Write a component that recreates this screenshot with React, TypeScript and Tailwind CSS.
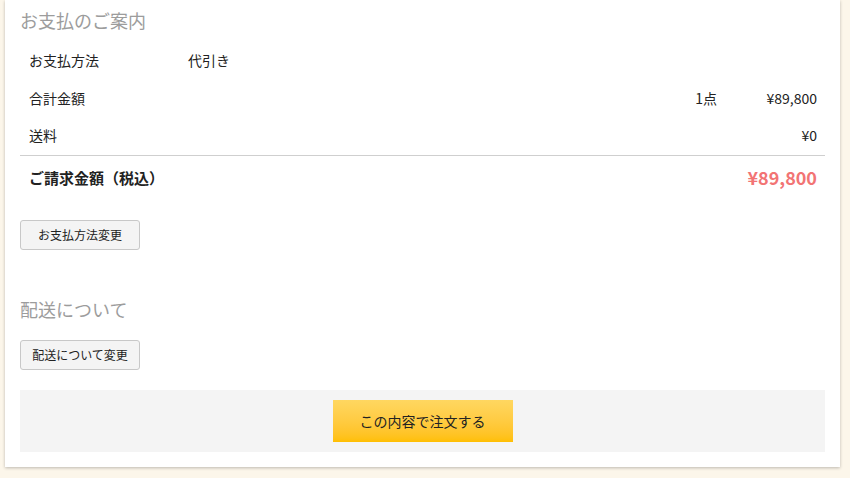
export default function App() {
  const font = { fontFamily: '"Noto Sans CJK JP", "Noto Sans", sans-serif' };
  return (
    <div className="min-h-[478px] w-[850px] bg-[#fcf6ea] pl-[5px] pr-[10px]" style={font}>
      <div className="bg-white px-[15px] pt-[6px] pb-[15px] shadow-[0_1px_3px_rgba(0,0,0,0.25)]">
        <h2 className="text-[18px] leading-[28px] text-[#9c9c9c]">お支払のご案内</h2>
        <table className="mt-[7px] w-full text-[14px] text-[#222]">
          <tbody>
            <tr className="h-[38px]">
              <td className="w-[168px] pl-[9px]">お支払方法</td>
              <td>代引き</td>
              <td />
              <td />
            </tr>
            <tr className="h-[38px]">
              <td className="pl-[9px]">合計金額</td>
              <td />
              <td className="text-right">1点</td>
              <td className="w-[108px] pr-[8px] text-right">¥89,800</td>
            </tr>
            <tr className="h-[38px] border-b border-[#cfcfcf]">
              <td className="pl-[9px]">送料</td>
              <td />
              <td />
              <td className="pr-[8px] text-right">¥0</td>
            </tr>
            <tr className="h-[45px]">
              <td colSpan={2} className="pl-[9px] text-[15px] font-bold">
                ご請求金額（税込）
              </td>
              <td />
              <td className="pr-[8px] text-right text-[18px] font-bold text-[#f27474]">¥89,800</td>
            </tr>
          </tbody>
        </table>
        <button className="mt-[20px] h-[30px] w-[120px] rounded-[3px] border border-[#c8c8c8] bg-[#f4f4f4] text-[12px] text-[#222]">
          お支払方法変更
        </button>
        <h2 className="mt-[45px] text-[18px] leading-[28px] text-[#9c9c9c]">配送について</h2>
        <button className="mt-[17px] block h-[30px] w-[120px] rounded-[3px] border border-[#c8c8c8] bg-[#f4f4f4] text-[12px] text-[#222]">
          配送について変更
        </button>
        <div className="mt-[20px] flex h-[62px] items-center justify-center bg-[#f4f4f4]">
          <button className="h-[42px] w-[180px] bg-gradient-to-b from-[#ffd760] to-[#ffbf00] text-[14px] text-[#222]">
            この内容で注文する
          </button>
        </div>
      </div>
    </div>
  );
}
